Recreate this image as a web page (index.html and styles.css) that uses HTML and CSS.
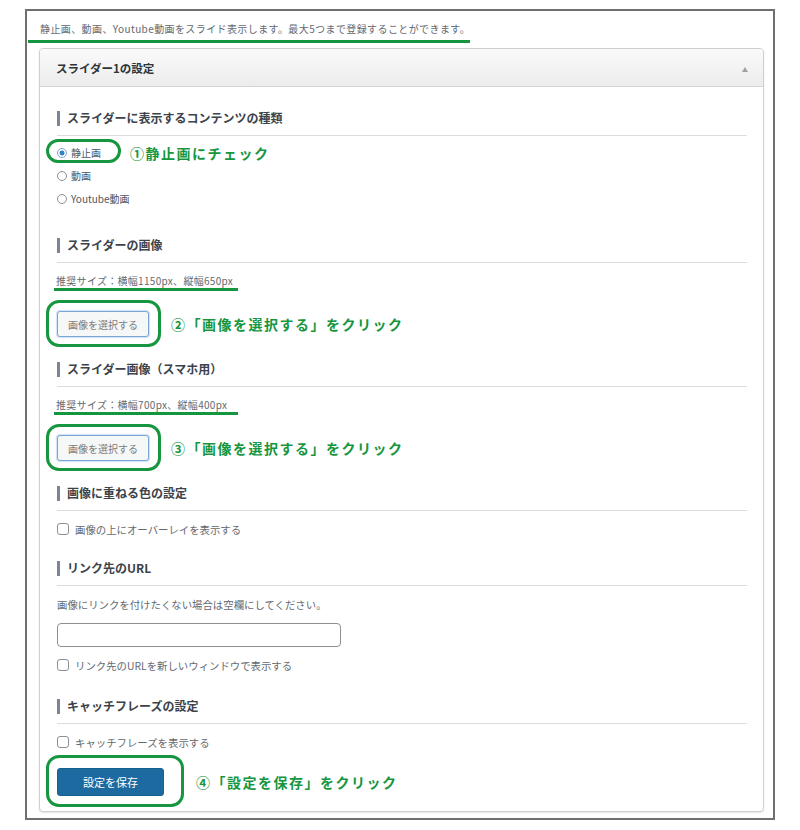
FILE: index.html
```html
<!DOCTYPE html>
<html lang="ja">
<head>
<meta charset="utf-8">
<title>スライダー設定</title>
<link rel="stylesheet" href="styles.css">
</head>
<body>
<div class="frame">
  <p class="lead">静止画、動画、Youtube動画をスライド表示します。最大5つまで登録することができます。</p>
  <div class="panel">
    <div class="panel-head">
      <h2 class="panel-title">スライダー1の設定</h2>
      <span class="toggle"></span>
    </div>
    <div class="panel-body">
      <section class="sec sec-first">
        <h3 class="sec-title">スライダーに表示するコンテンツの種類</h3>
        <div class="radios">
          <div class="choice-row">
            <span class="target">
              <label class="choice"><input type="radio" name="kind" checked>静止画</label>
              <span class="ring ring-radio"></span>
            </span>
            <span class="callout callout-radio">①静止画にチェック</span>
          </div>
          <div class="choice-row">
            <label class="choice"><input type="radio" name="kind">動画</label>
          </div>
          <div class="choice-row">
            <label class="choice"><input type="radio" name="kind">Youtube動画</label>
          </div>
        </div>
      </section>

      <section class="sec sec-loose">
        <h3 class="sec-title">スライダーの画像</h3>
        <p class="size-note">推奨サイズ：横幅1150px、縦幅650px</p>
        <div class="btn-row">
          <span class="target">
            <button class="btn" type="button">画像を選択する</button>
            <span class="ring ring-btn"></span>
          </span>
          <span class="callout callout-btn">②「画像を選択する」をクリック</span>
        </div>
      </section>

      <section class="sec">
        <h3 class="sec-title">スライダー画像（スマホ用）</h3>
        <p class="size-note">推奨サイズ：横幅700px、縦幅400px</p>
        <div class="btn-row">
          <span class="target">
            <button class="btn" type="button">画像を選択する</button>
            <span class="ring ring-btn"></span>
          </span>
          <span class="callout callout-btn">③「画像を選択する」をクリック</span>
        </div>
      </section>

      <section class="sec">
        <h3 class="sec-title">画像に重ねる色の設定</h3>
        <div class="check-row">
          <label class="check"><input type="checkbox">画像の上にオーバーレイを表示する</label>
        </div>
      </section>

      <section class="sec sec-tight">
        <h3 class="sec-title">リンク先のURL</h3>
        <p class="help">画像にリンクを付けたくない場合は空欄にしてください。</p>
        <input class="url-input" type="text">
        <div class="check-row">
          <label class="check"><input type="checkbox">リンク先のURLを新しいウィンドウで表示する</label>
        </div>
      </section>

      <section class="sec sec-mid">
        <h3 class="sec-title">キャッチフレーズの設定</h3>
        <div class="check-row">
          <label class="check"><input type="checkbox">キャッチフレーズを表示する</label>
        </div>
        <div class="btn-row save-row">
          <span class="target">
            <button class="btn-primary" type="button">設定を保存</button>
            <span class="ring ring-save"></span>
          </span>
          <span class="callout callout-save">④「設定を保存」をクリック</span>
        </div>
      </section>
    </div>
  </div>
</div>
</body>
</html>
```

FILE: styles.css
```css
* {
  box-sizing: border-box;
}

body {
  margin: 0;
  background: #ffffff;
  font-family: "Noto Sans CJK JP", "Noto Sans", sans-serif;
  color: #50575e;
}

.frame {
  margin: 9px 0 0 25px;
  width: 750px;
  height: 811px;
  border: 2px solid #6f6f6f;
  padding-top: 10px;
}

.lead {
  display: block;
  width: 442px;
  margin: 0 0 0 1px;
  padding: 0 0 3px 12px;
  border-bottom: 3px solid #14963f;
  font-size: 10px;
  line-height: 16px;
  letter-spacing: 0.4px;
  white-space: nowrap;
  color: #646970;
}

.panel {
  margin: 5px 9px 0 12px;
  border: 1px solid #cfcfcf;
  border-radius: 4px;
  background: #ffffff;
  box-shadow: 0 1px 2px rgba(0, 0, 0, 0.1);
}

.panel-head {
  display: flex;
  align-items: center;
  justify-content: space-between;
  height: 38px;
  padding: 0 15px 0 16px;
  background: linear-gradient(#fafafa, #ececec);
  border-bottom: 1px solid #d6d6d6;
  border-radius: 3px 3px 0 0;
}

.panel-title {
  margin: 0;
  font-size: 11.5px;
  font-weight: 700;
  color: #2c3338;
}

.toggle {
  width: 0;
  height: 0;
  margin-top: 4px;
  border-left: 3.5px solid transparent;
  border-right: 3.5px solid transparent;
  border-bottom: 5px solid #a0a0a0;
}

.panel-body {
  padding: 23px 16px 15px 17px;
}

.sec + .sec {
  margin-top: 24px;
}

.sec + .sec-loose {
  margin-top: 27px;
}

.sec + .sec-tight {
  margin-top: 21px;
}

.sec + .sec-mid {
  margin-top: 23px;
}

.sec-title {
  display: flex;
  align-items: center;
  gap: 7px;
  margin: 0;
  padding-bottom: 9px;
  border-bottom: 1px solid #dcdcde;
  font-size: 12px;
  font-weight: 700;
  line-height: 16px;
  color: #3c434a;
}

.sec-title::before {
  content: "";
  width: 3px;
  height: 15px;
  background: #7b8595;
}

.radios {
  margin-top: 5px;
}

.choice-row {
  display: flex;
  align-items: center;
  height: 23px;
}

.choice {
  display: inline-flex;
  align-items: center;
  gap: 4px;
  height: 23px;
  font-size: 10px;
  color: #50575e;
}

.choice input {
  appearance: none;
  -webkit-appearance: none;
  width: 10px;
  height: 10px;
  margin: 0;
  border: 1px solid #8c8f94;
  border-radius: 50%;
  background: #ffffff;
}

.choice input:checked {
  border-color: #7fa3cc;
  background: radial-gradient(circle, #3582c4 0 2.2px, #ffffff 2.8px);
}

.target {
  position: relative;
  display: inline-flex;
  align-items: center;
}

.ring {
  position: absolute;
  border: 3px solid #16963f;
  border-radius: 13px;
  pointer-events: none;
}

.ring-radio {
  top: -2px;
  bottom: 1px;
  left: -11px;
  right: -20px;
}

.ring-btn {
  top: -11px;
  bottom: -10px;
  left: -11px;
  right: -12px;
}

.ring-save {
  top: -13px;
  bottom: -11px;
  left: -11px;
  right: -20px;
}

.callout {
  font-size: 14px;
  font-weight: 700;
  line-height: 20px;
  letter-spacing: 1.5px;
  color: #16963f;
  white-space: nowrap;
}

.callout-radio {
  margin-left: 29px;
}

.callout-btn {
  margin-left: 22px;
}

.callout-save {
  margin-left: 32px;
}

.size-note {
  display: block;
  width: 184px;
  margin: 10px 0 0 -3px;
  padding: 0 0 0 2px;
  border-bottom: 3px solid #14963f;
  font-size: 10px;
  line-height: 15px;
  letter-spacing: 0.3px;
  white-space: nowrap;
  color: #646970;
}

.btn-row {
  display: flex;
  align-items: center;
  margin-top: 20px;
}

.btn {
  height: 26px;
  padding: 0 10px;
  border: 1px solid #7aa6d6;
  border-radius: 3px;
  background: #f6f7f7;
  font-family: inherit;
  font-size: 10px;
  color: #787c82;
  box-shadow: 0 0 1px 1px rgba(114, 170, 220, 0.35);
}

.save-row {
  margin-top: 16px;
}

.btn-primary {
  height: 28px;
  padding: 0 25px;
  border: 1px solid #17608f;
  border-radius: 3px;
  background: #1c6aa0;
  font-family: inherit;
  font-size: 11px;
  color: #ffffff;
}

.check-row {
  display: flex;
  align-items: center;
  height: 20px;
  margin-top: 8px;
}

.check {
  display: inline-flex;
  align-items: center;
  gap: 6px;
  font-size: 10.4px;
  color: #646970;
}

.check input {
  appearance: none;
  -webkit-appearance: none;
  width: 12px;
  height: 12px;
  margin: 0;
  border: 1px solid #8c8f94;
  border-radius: 3px;
  background: #ffffff;
}

.help {
  margin: 11px 0 0;
  font-size: 10.4px;
  line-height: 16px;
  color: #646970;
}

.url-input {
  display: block;
  width: 284px;
  height: 24px;
  margin-top: 10px;
  border: 1px solid #8c8f94;
  border-radius: 4px;
  background: #ffffff;
}
```
